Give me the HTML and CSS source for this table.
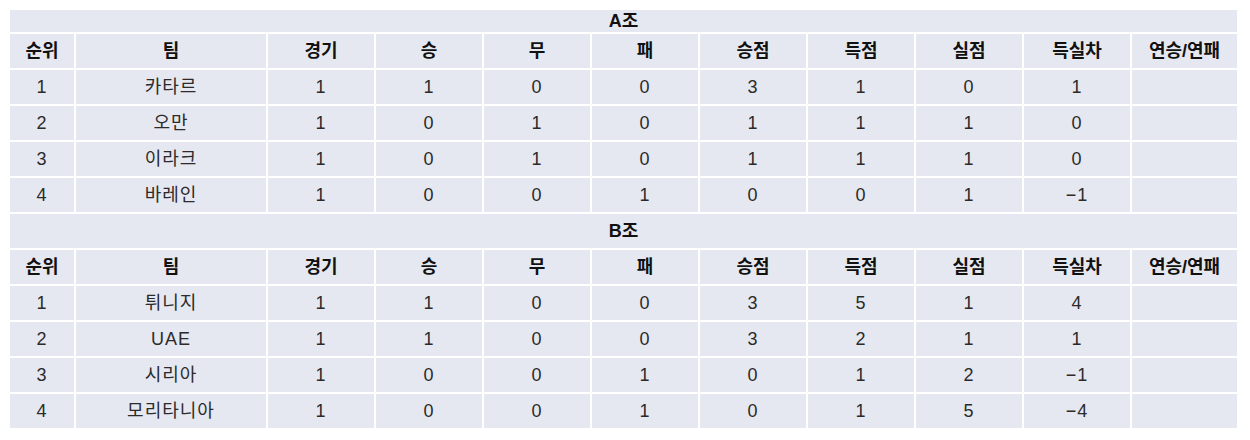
FILE: index.html
```html
<!DOCTYPE html>
<html lang="ko">
<head>
<meta charset="utf-8">
<title>조별 순위</title>
<link rel="stylesheet" href="styles.css">
</head>
<body>
<table class="standings">
  <colgroup>
    <col class="c-rank"><col class="c-team">
    <col class="c-num"><col class="c-num"><col class="c-num"><col class="c-num">
    <col class="c-num"><col class="c-num"><col class="c-num"><col class="c-num">
    <col class="c-last">
  </colgroup>
  <tbody>
    <tr class="group group-first"><th colspan="11">A조</th></tr>
    <tr class="head"><th>순위</th><th>팀</th><th>경기</th><th>승</th><th>무</th><th>패</th><th>승점</th><th>득점</th><th>실점</th><th>득실차</th><th>연승/연패</th></tr>
    <tr><td>1</td><td>카타르</td><td>1</td><td>1</td><td>0</td><td>0</td><td>3</td><td>1</td><td>0</td><td>1</td><td></td></tr>
    <tr><td>2</td><td>오만</td><td>1</td><td>0</td><td>1</td><td>0</td><td>1</td><td>1</td><td>1</td><td>0</td><td></td></tr>
    <tr><td>3</td><td>이라크</td><td>1</td><td>0</td><td>1</td><td>0</td><td>1</td><td>1</td><td>1</td><td>0</td><td></td></tr>
    <tr><td>4</td><td>바레인</td><td>1</td><td>0</td><td>0</td><td>1</td><td>0</td><td>0</td><td>1</td><td>−1</td><td></td></tr>
    <tr class="group"><th colspan="11">B조</th></tr>
    <tr class="head"><th>순위</th><th>팀</th><th>경기</th><th>승</th><th>무</th><th>패</th><th>승점</th><th>득점</th><th>실점</th><th>득실차</th><th>연승/연패</th></tr>
    <tr><td>1</td><td>튀니지</td><td>1</td><td>1</td><td>0</td><td>0</td><td>3</td><td>5</td><td>1</td><td>4</td><td></td></tr>
    <tr><td>2</td><td>UAE</td><td>1</td><td>1</td><td>0</td><td>0</td><td>3</td><td>2</td><td>1</td><td>1</td><td></td></tr>
    <tr><td>3</td><td>시리아</td><td>1</td><td>0</td><td>0</td><td>1</td><td>0</td><td>1</td><td>2</td><td>−1</td><td></td></tr>
    <tr><td>4</td><td>모리타니아</td><td>1</td><td>0</td><td>0</td><td>1</td><td>0</td><td>1</td><td>5</td><td>−4</td><td></td></tr>
  </tbody>
</table>
</body>
</html>
```

FILE: styles.css
```css
html, body {
  background: #ffffff;
}

body {
  margin: 8px;
  font-family: "Liberation Sans", "Noto Sans CJK KR", sans-serif;
  font-size: 18px;
  color: #1a1a1a;
}

.standings {
  table-layout: fixed;
  width: 1231px;
  border-collapse: separate;
  border-spacing: 2px;
}

.c-rank { width: 64px; }
.c-team { width: 190px; }
.c-num  { width: 106px; }
.c-last { width: 105px; }

.standings th,
.standings td {
  background: #e6e8f1;
  padding: 0;
  height: 34px;
  line-height: 20px;
  text-align: center;
  vertical-align: middle;
  white-space: nowrap;
}

.standings td {
  font-weight: 400;
  color: #2b2b2b;
  letter-spacing: 1px;
}

.standings th {
  font-weight: 700;
  color: #111111;
}

.group-first th {
  height: 22px;
}
```
